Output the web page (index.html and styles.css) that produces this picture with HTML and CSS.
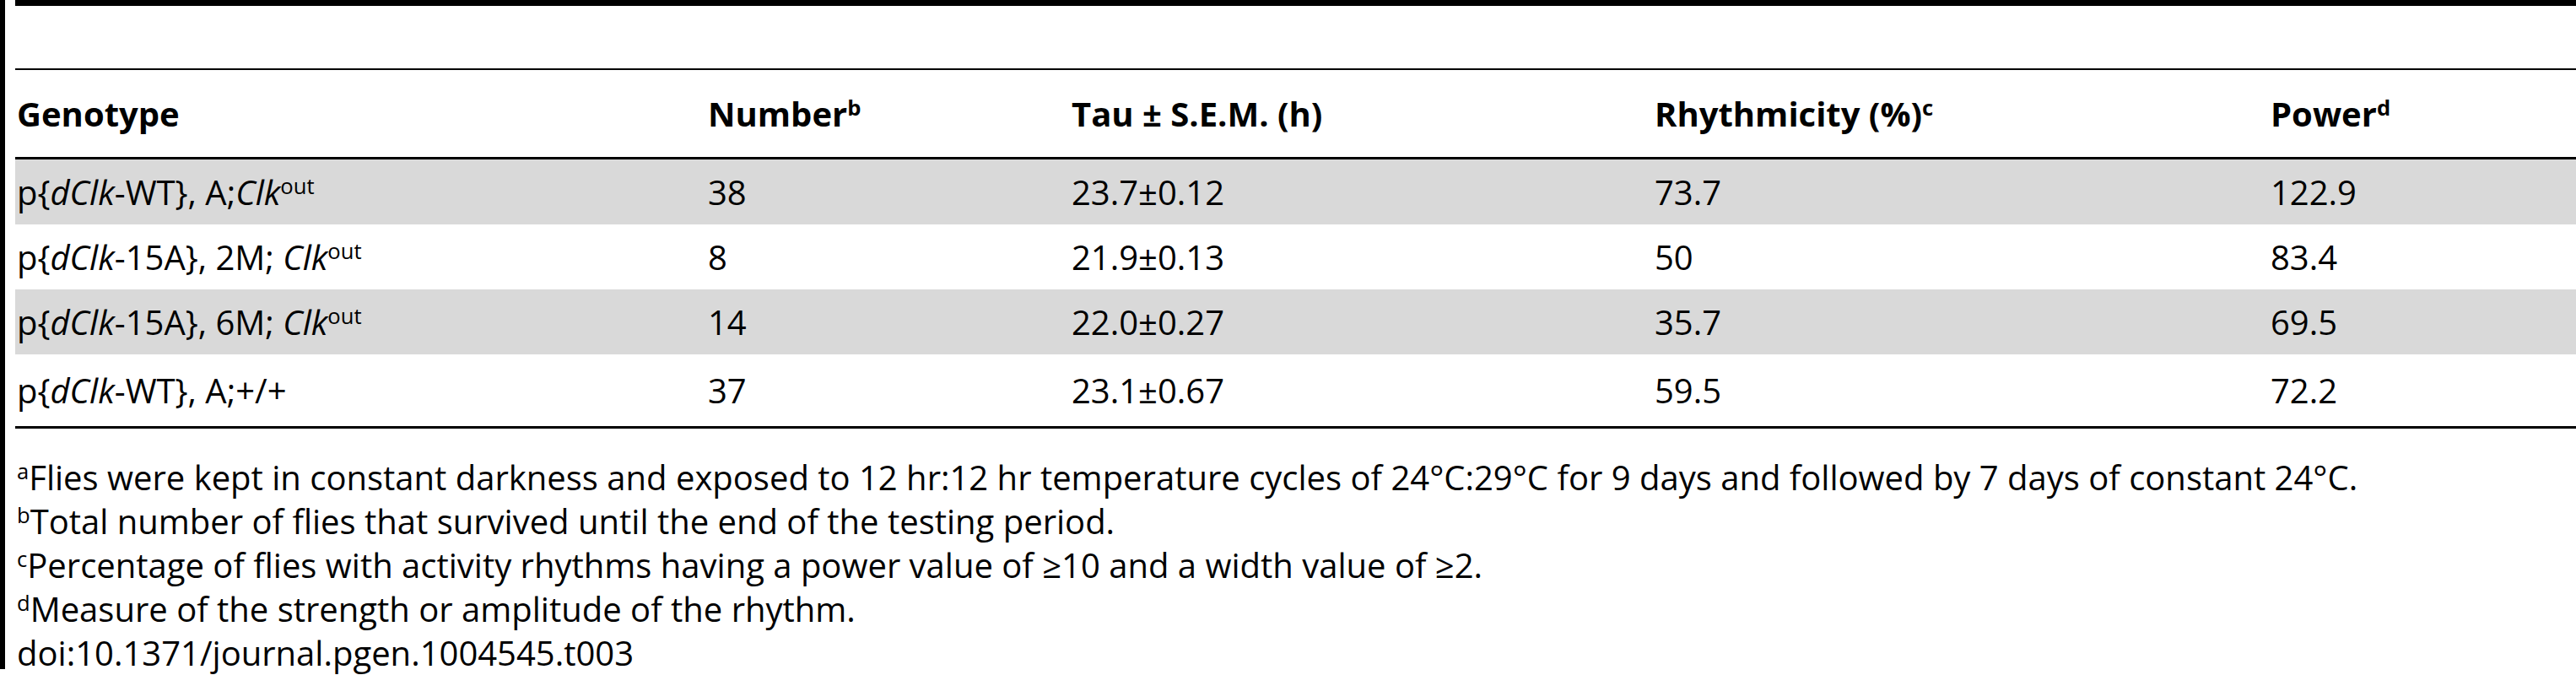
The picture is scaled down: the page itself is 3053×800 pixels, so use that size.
FILE: index.html
```html
<!DOCTYPE html>
<html lang="en">
<head>
<meta charset="utf-8">
<title>Table 3</title>
<link rel="stylesheet" href="styles.css">
</head>
<body>
<div class="frame">
  <div class="edge"></div>
  <div class="content">
    <div class="topbar"></div>
    <table class="data">
      <colgroup>
        <col class="c1"><col class="c2"><col class="c3"><col class="c4"><col class="c5">
      </colgroup>
      <thead>
        <tr>
          <th>Genotype</th>
          <th>Number<sup>b</sup></th>
          <th>Tau ± S.E.M. (h)</th>
          <th>Rhythmicity (%)<sup>c</sup></th>
          <th>Power<sup>d</sup></th>
        </tr>
      </thead>
      <tbody>
        <tr class="shade">
          <td>p{<i>dClk</i>-WT}, A;<i>Clk</i><sup>out</sup></td>
          <td>38</td>
          <td>23.7±0.12</td>
          <td>73.7</td>
          <td>122.9</td>
        </tr>
        <tr>
          <td>p{<i>dClk</i>-15A}, 2M; <i>Clk</i><sup>out</sup></td>
          <td>8</td>
          <td>21.9±0.13</td>
          <td>50</td>
          <td>83.4</td>
        </tr>
        <tr class="shade">
          <td>p{<i>dClk</i>-15A}, 6M; <i>Clk</i><sup>out</sup></td>
          <td>14</td>
          <td>22.0±0.27</td>
          <td>35.7</td>
          <td>69.5</td>
        </tr>
        <tr class="last">
          <td>p{<i>dClk</i>-WT}, A;+/+</td>
          <td>37</td>
          <td>23.1±0.67</td>
          <td>59.5</td>
          <td>72.2</td>
        </tr>
      </tbody>
    </table>
    <div class="notes">
      <p><sup>a</sup>Flies were kept in constant darkness and exposed to 12 hr:12 hr temperature cycles of 24°C:29°C for 9 days and followed by 7 days of constant 24°C.</p>
      <p><sup>b</sup>Total number of flies that survived until the end of the testing period.</p>
      <p><sup>c</sup>Percentage of flies with activity rhythms having a power value of ≥10 and a width value of ≥2.</p>
      <p><sup>d</sup>Measure of the strength or amplitude of the rhythm.</p>
      <p class="doi">doi:10.1371/journal.pgen.1004545.t003</p>
    </div>
  </div>
</div>
</body>
</html>
```

FILE: styles.css
```css
html, body {
  margin: 0;
  padding: 0;
  background: #ffffff;
}

body {
  font-family: "Open Sans", "Noto Sans", "DejaVu Sans", sans-serif;
  font-size: 40px;
  color: #000000;
  width: 3053px;
  height: 800px;
  overflow: hidden;
}

.frame {
  display: flex;
  align-items: flex-start;
  height: 800px;
}

.edge {
  width: 6px;
  height: 793px;
  flex: none;
  background: #000000;
}

.content {
  flex: 1;
  padding-left: 12px;
  display: flex;
  flex-direction: column;
}

.topbar {
  height: 7px;
  flex: none;
  background: #000000;
}

.data {
  margin-top: 74px;
  width: 100%;
  border-collapse: collapse;
  table-layout: fixed;
  border-top: 2px solid #000000;
  border-bottom: 3px solid #000000;
}

.c1 { width: 819px; }
.c2 { width: 431px; }
.c3 { width: 691px; }
.c4 { width: 730px; }
.c5 { width: auto; }

.data th,
.data td {
  text-align: left;
  padding: 0 0 0 2px;
  white-space: nowrap;
  vertical-align: middle;
  line-height: 1.2;
}

.data th {
  font-weight: 700;
  height: 103px;
  border-bottom: 3px solid #000000;
}

.data td {
  height: 77px;
}

.data tr.last td {
  height: 85px;
}

.data tr.shade td {
  background: #d9d9d9;
}

sup {
  font-size: 0.64em;
  line-height: 0;
  vertical-align: 0.52em;
}

.notes {
  padding-top: 32px;
}

.notes p {
  margin: 0;
  padding-left: 2px;
  line-height: 52px;
  white-space: nowrap;
}

.notes .doi {
  margin-top: 0;
}
```
